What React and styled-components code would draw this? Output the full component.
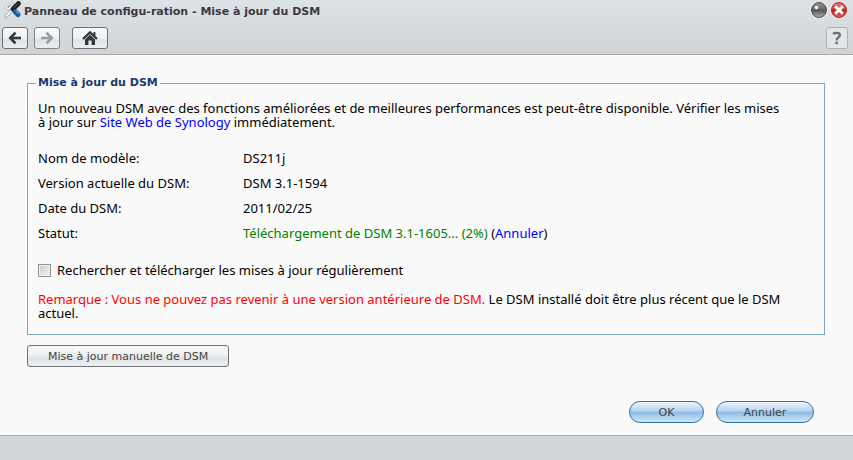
import { useState } from "react";
import styled, { createGlobalStyle } from "styled-components";

const infos = [
    { label: "Nom de modèle:", value: "DS211j" },
    { label: "Version actuelle du DSM:", value: "DSM 3.1-1594" },
    { label: "Date du DSM:", value: "2011/02/25" },
];

const ToolsIcon = () => (
    <svg width="18" height="18" viewBox="0 0 18 18" aria-hidden="true">
        <path d="M6 6 L9 9" stroke="#8d949b" strokeWidth="4" strokeLinecap="round" />
        <path d="M1 3.5 A3.6 3.6 0 1 0 5 0.5" fill="none" stroke="#a3a9ae" strokeWidth="3" />
        <path d="M1 3.5 A3.6 3.6 0 1 0 5 0.5" fill="none" stroke="#f2f4f5" strokeWidth="1.6" />
        <path d="M6 6 L10 10" stroke="#f2f4f6" strokeWidth="2" strokeLinecap="round" />
        <path d="M2 15.5 L9 8" stroke="#a7adb2" strokeWidth="3.2" strokeLinecap="round" />
        <path d="M2 15.5 L9 8" stroke="#ffffff" strokeWidth="1.6" />
        <path d="M9 8 L14.5 2.5" stroke="#1c2024" strokeWidth="4.6" strokeLinecap="round" />
        <path d="M10 6.5 L14 2.5" stroke="#5f686f" strokeWidth="1" />
        <path d="M11 10.5 L14 13.5" stroke="#14579c" strokeWidth="5" strokeLinecap="round" />
        <path d="M12 10 L14.5 12.5" stroke="#5aa2e0" strokeWidth="1.4" strokeLinecap="round" />
    </svg>
);

const ArrowIcon = ({ flip }) => (
    <svg width="14" height="14" viewBox="0 0 14 14" aria-hidden="true">
        <g
            transform={flip ? "translate(14 0) scale(-1 1)" : undefined}
            fill="none"
            stroke="currentColor"
            strokeWidth="2.6"
        >
            <path d="M2 7 H13" />
            <path d="M7.5 1.6 L2.2 7 L7.5 12.4" strokeLinejoin="miter" />
        </g>
    </svg>
);

const HomeIcon = () => (
    <svg width="16" height="14" viewBox="0 0 16 14" aria-hidden="true">
        <path d="M1 8 L8 1.4 L15 8" fill="none" stroke="currentColor" strokeWidth="2.4" />
        <path d="M11.4 1 H13.4 V6 L11.4 4 Z" fill="currentColor" />
        <path d="M3 8.4 L8 3.8 L13 8.4 V14 H9.6 V9.6 H6.4 V14 H3 Z" fill="currentColor" />
    </svg>
);

const MinimizeIcon = () => (
    <svg width="18" height="18" viewBox="0 0 18 18" aria-hidden="true">
        <defs>
            <linearGradient id="grayBall" x1="0" y1="0" x2="0" y2="1">
                <stop offset="0" stopColor="#949494" />
                <stop offset="0.45" stopColor="#6c6c6c" />
                <stop offset="0.5" stopColor="#525252" />
                <stop offset="1" stopColor="#b0b0b0" />
            </linearGradient>
        </defs>
        <circle cx="9" cy="9" r="8.8" fill="#f4f4f4" />
        <circle cx="9" cy="9" r="7.5" fill="url(#grayBall)" stroke="#484848" />
        <circle cx="6.5" cy="6.5" r="1.7" fill="#ffffff" />
    </svg>
);

const CloseIcon = () => (
    <svg width="18" height="18" viewBox="0 0 18 18" aria-hidden="true">
        <defs>
            <linearGradient id="redBall" x1="0" y1="0" x2="0" y2="1">
                <stop offset="0" stopColor="#d8807c" />
                <stop offset="0.45" stopColor="#cc4541" />
                <stop offset="0.5" stopColor="#bd1c1a" />
                <stop offset="1" stopColor="#e8625a" />
            </linearGradient>
        </defs>
        <circle cx="9" cy="9" r="8.8" fill="#f6e4e4" />
        <circle cx="9" cy="9" r="7.5" fill="url(#redBall)" stroke="#b3211f" />
        <path d="M5.2 5.2 L12.8 12.8 M12.8 5.2 L5.2 12.8" stroke="#ffffff" strokeWidth="3" />
    </svg>
);

const HelpIcon = () => (
    <svg width="10" height="14" viewBox="0 0 10 14" aria-hidden="true">
        <path
            d="M1 2.9 C3 1.4 7.8 1.2 7.8 4.2 C7.8 6.4 4.6 6.4 4.6 9.4"
            fill="none"
            stroke="currentColor"
            strokeWidth="2.4"
        />
        <rect x="3.4" y="10.8" width="2.6" height="2.4" fill="currentColor" />
    </svg>
);

const App = () => {
    const [autoUpdate, setAutoUpdate] = useState(false);

    return (
        <Window>
            <GlobalStyle />
            <Header>
                <TitleBar>
                    <ToolsIcon />
                    <Title>Panneau de configu-ration - Mise à jour du DSM</Title>
                    <BallButton type="button" aria-label="Réduire"><MinimizeIcon /></BallButton>
                    <BallButton type="button" aria-label="Fermer"><CloseIcon /></BallButton>
                </TitleBar>
                <Toolbar>
                    <ToolButton type="button" aria-label="Précédent"><ArrowIcon /></ToolButton>
                    <ToolButton type="button" aria-label="Suivant" disabled><ArrowIcon flip /></ToolButton>
                    <HomeButton type="button" aria-label="Accueil"><HomeIcon /></HomeButton>
                    <HelpButton type="button" aria-label="Aide"><HelpIcon /></HelpButton>
                </Toolbar>
            </Header>
            <Content>
                <Group>
                    <Legend>Mise à jour du DSM</Legend>
                    <Text>
                        Un nouveau DSM avec des fonctions améliorées et de meilleures performances est
                        peut-être disponible. Vérifier les mises
                        <br />
                        à jour sur <Link href="#synology">Site Web de Synology</Link> immédiatement.
                    </Text>
                    <InfoList>
                        {infos.map(({ label, value }) => (
                            <InfoRow key={label}>
                                <dt>{label}</dt>
                                <dd>{value}</dd>
                            </InfoRow>
                        ))}
                        <InfoRow>
                            <dt>Statut:</dt>
                            <dd>
                                <Colored $color="#008000">Téléchargement de DSM 3.1-1605... (2%)</Colored>{" "}
                                (<Link href="#annuler">Annuler</Link>)
                            </dd>
                        </InfoRow>
                    </InfoList>
                    <CheckLabel>
                        <Checkbox
                            type="checkbox"
                            checked={autoUpdate}
                            onChange={(e) => setAutoUpdate(e.target.checked)}
                        />
                        Rechercher et télécharger les mises à jour régulièrement
                    </CheckLabel>
                    <Text>
                        <Colored $color="#ff0000">
                            Remarque : Vous ne pouvez pas revenir à une version antérieure de DSM.
                        </Colored>{" "}
                        Le DSM installé doit être plus récent que le DSM
                        <br />
                        actuel.
                    </Text>
                </Group>
                <ManualButton type="button">Mise à jour manuelle de DSM</ManualButton>
                <Actions>
                    <PillButton type="button">OK</PillButton>
                    <PillButton type="button" $wide>Annuler</PillButton>
                </Actions>
            </Content>
            <StatusBar />
        </Window>
    );
};
export default App;

const GlobalStyle = createGlobalStyle`
    * {
        box-sizing: border-box;
    }
    body {
        margin: 0;
        font-family: "Noto Sans", sans-serif;
        font-size: 13px;
        line-height: 14px;
        color: #000000;
    }
    button {
        font-family: Verdana, "DejaVu Sans", sans-serif;
        font-size: 11px;
        padding: 0;
        cursor: pointer;
    }
    svg {
        display: block;
        flex: none;
    }
`

const Window = styled.div`
    display: flex;
    flex-direction: column;
    min-height: 100vh;
    background: #fafafa;
`

const Header = styled.header`
    height: 55px;
    background: linear-gradient(#dde2e6, #d0d4d7);
    border-bottom: 1px solid #a6a6a6;
`

const TitleBar = styled.div`
    display: flex;
    align-items: center;
    gap: 2px;
    height: 20px;
    padding: 0 5px 0 4px;
`

const Title = styled.h1`
    flex: 1;
    margin: 0;
    padding-top: 4px;
    font-family: Verdana, "DejaVu Sans", sans-serif;
    font-size: 11px;
    font-weight: bold;
    color: #3a3a40;
`

const BallButton = styled.button`
    border: none;
    background: none;
`

const Toolbar = styled.div`
    display: flex;
    gap: 6px;
    padding: 7px 5px 0 2px;
`

const ToolButton = styled.button`
    display: flex;
    align-items: center;
    justify-content: center;
    width: 26px;
    height: 22px;
    border: 1px solid #6b7176;
    border-radius: 3px;
    background: linear-gradient(#fafbfb, #eef0f1 50%, #dfe3e5 60%, #eceff0);
    color: #33373a;
    &:disabled {
        color: #9a9c9e;
        border-color: #7d8286;
    }
`

const HomeButton = styled(ToolButton)`
    width: 36px;
    margin-left: 6px;
`

const HelpButton = styled(ToolButton)`
    width: 22px;
    margin-left: auto;
    border-color: #aeb2b5;
    background: #e2e6e9;
    color: #6c6e70;
`

const Content = styled.main`
    flex: 1;
    display: flex;
    flex-direction: column;
    align-items: flex-start;
    padding: 21px 28px 12px 27px;
`

const Group = styled.fieldset`
    align-self: stretch;
    min-width: 0;
    margin: 0;
    padding: 11px 10px 14px;
    border: 1px solid #7ba7c9;
`

const Legend = styled.legend`
    padding: 0 2px;
    margin-left: -2px;
    font-family: Verdana, "DejaVu Sans", sans-serif;
    font-size: 11px;
    font-weight: bold;
    color: #15396e;
`

const Text = styled.p`
    margin: 0;
`

const Link = styled.a`
    color: #0000ff;
    text-decoration: none;
`

const Colored = styled.span`
    color: ${(props) => props.$color};
`

const InfoList = styled.dl`
    margin: 16px 0 18px;
`

const InfoRow = styled.div`
    display: grid;
    grid-template-columns: 205px 1fr;
    align-items: center;
    height: 25px;
    dd {
        margin: 0;
    }
`

const CheckLabel = styled.label`
    display: flex;
    align-items: center;
    gap: 6px;
    margin-bottom: 15px;
`

const Checkbox = styled.input`
    appearance: none;
    width: 13px;
    height: 13px;
    margin: 0;
    border: 1px solid #8e8f8f;
    background: linear-gradient(135deg, #c9cdd2, #f4f5f6);
    box-shadow: inset 0 0 0 1px #f4f4f4;
    &:checked {
        background: #4b6a9b;
    }
`

const ManualButton = styled.button`
    height: 22px;
    margin-top: 10px;
    padding: 0 20px;
    border: 1px solid #6b7176;
    border-radius: 3px;
    background: linear-gradient(#fafbfb, #eceeef 50%, #dfe3e6 60%, #eef0f1);
    color: #444444;
`

const Actions = styled.div`
    align-self: flex-end;
    display: flex;
    gap: 12px;
    margin-top: auto;
    padding-right: 11px;
`

const PillButton = styled.button`
    width: ${(props) => (props.$wide ? "98px" : "75px")};
    height: 22px;
    border: 1px solid #2f74a3;
    border-radius: 11px;
    background: linear-gradient(#f0f6fc, #b5d2ee 45%, #8dbce6 52%, #cfe7fa);
    color: #444444;
`

const StatusBar = styled.footer`
    height: 25px;
    background: #d1d6da;
    border-top: 1px solid #a6a6a6;
`
